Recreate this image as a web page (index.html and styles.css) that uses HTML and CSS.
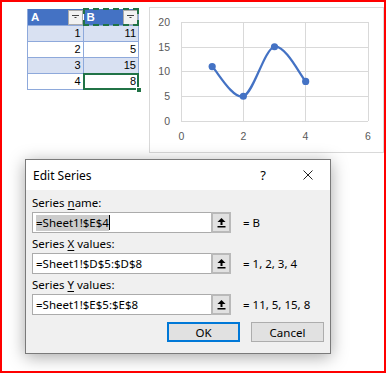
FILE: index.html
```html
<!DOCTYPE html>
<html>
<head>
<meta charset="utf-8">
<link rel="stylesheet" href="styles.css">
</head>
<body>
<div class="frame">
  <div class="top">
    <div class="table">
      <div class="row head">
        <div class="cell hcell">A<span class="dd"><svg width="7" height="4" viewBox="0 0 7 4"><path d="M0 0.5H7M2.5 2.5H4.5" stroke="#444" stroke-width="1"/></svg></span></div>
        <div class="cell hcell marquee">B<span class="dd"><svg width="7" height="4" viewBox="0 0 7 4"><path d="M0 0.5H7M2.5 2.5H4.5" stroke="#444" stroke-width="1"/></svg></span></div>
      </div>
      <div class="row band"><div class="cell">1</div><div class="cell">11</div></div>
      <div class="row"><div class="cell">2</div><div class="cell">5</div></div>
      <div class="row band"><div class="cell">3</div><div class="cell">15</div></div>
      <div class="row"><div class="cell">4</div><div class="cell active">8<span class="handle"></span></div></div>
    </div>
    <div class="chart">
      <svg width="240" height="144" viewBox="0 0 240 144">
        <g stroke="#D9D9D9" stroke-width="1">
          <path d="M31 14.5H218M31 39.5H218M31 63.5H218M31 88.5H218M31 113.5H218"/>
          <path d="M31.5 14V113M93.5 14V113M155.5 14V113M218.5 14V113"/>
        </g>
        <g class="lbl" text-anchor="end">
          <text x="20" y="18">20</text>
          <text x="20" y="43">15</text>
          <text x="20" y="67">10</text>
          <text x="20" y="92">5</text>
          <text x="20" y="117">0</text>
        </g>
        <g class="lbl" text-anchor="middle">
          <text x="31.5" y="132">0</text>
          <text x="93.5" y="132">2</text>
          <text x="155.5" y="132">4</text>
          <text x="218" y="132">6</text>
        </g>
        <path d="M62.17,58.55 C67.36,63.5 82.94,91.55 93.33,88.25 C103.72,84.95 114.11,41.2 124.5,38.75 C134.89,36.27 150.48,67.62 155.67,73.4" fill="none" stroke="#4472C4" stroke-width="2.25" stroke-linecap="round"/>
        <g fill="#4472C4">
          <circle cx="62.17" cy="58.55" r="3.6"/>
          <circle cx="93.33" cy="88.25" r="3.6"/>
          <circle cx="124.5" cy="38.75" r="3.6"/>
          <circle cx="155.67" cy="73.4" r="3.6"/>
        </g>
      </svg>
    </div>
  </div>

  <div class="dialog">
    <div class="titlebar">
      <span class="title">Edit Series</span>
      <span class="help">?</span>
      <span class="close"><svg width="10" height="10" viewBox="0 0 10 10"><path d="M0.5 0.5L9.5 9.5M9.5 0.5L0.5 9.5" stroke="#222" stroke-width="1"/></svg></span>
    </div>
    <div class="body">
      <div class="group">
        <div class="label">Series <u>n</u>ame:</div>
        <div class="line">
          <div class="field"><span class="sel">=Sheet1!$E$4</span><span class="caret"></span></div>
          <div class="pick"><svg width="9" height="10" viewBox="0 0 9 10"><path d="M4.5 0L8.5 4H5.5V7H3.5V4H0.5Z" fill="#000"/><rect x="0.5" y="8" width="8" height="1.5" fill="#000"/></svg></div>
          <div class="val">= B</div>
        </div>
      </div>
      <div class="group">
        <div class="label">Series <u>X</u> values:</div>
        <div class="line">
          <div class="field">=Sheet1!$D$5:$D$8</div>
          <div class="pick"><svg width="9" height="10" viewBox="0 0 9 10"><path d="M4.5 0L8.5 4H5.5V7H3.5V4H0.5Z" fill="#000"/><rect x="0.5" y="8" width="8" height="1.5" fill="#000"/></svg></div>
          <div class="val">= 1, 2, 3, 4</div>
        </div>
      </div>
      <div class="group">
        <div class="label">Series <u>Y</u> values:</div>
        <div class="line">
          <div class="field">=Sheet1!$E$5:$E$8</div>
          <div class="pick"><svg width="9" height="10" viewBox="0 0 9 10"><path d="M4.5 0L8.5 4H5.5V7H3.5V4H0.5Z" fill="#000"/><rect x="0.5" y="8" width="8" height="1.5" fill="#000"/></svg></div>
          <div class="val">= 11, 5, 15, 8</div>
        </div>
      </div>
      <div class="buttons">
        <div class="btn ok">OK</div>
        <div class="btn">Cancel</div>
      </div>
    </div>
  </div>
</div>
</body>
</html>
```
FILE: styles.css
```css
* { box-sizing: border-box; }
html, body { margin: 0; padding: 0; background: #fff; }
.frame {
  position: relative;
  width: 386px;
  height: 373px;
  border: 2px solid #FF0000;
  background: #fff;
  overflow: hidden;
}
.top {
  display: flex;
  align-items: flex-start;
  padding: 5px 0 0 25px;
}
.table {
  margin-top: 2px;
  width: 112px;
  font-family: "Liberation Sans", Arial, sans-serif;
  font-size: 11px;
  color: #000;
  border-left: 1px solid #8EA9DB;
  border-right: 1px solid #8EA9DB;
  border-bottom: 1px solid #8EA9DB;
}
.row { display: flex; height: 16px; border-top: 1px solid #8EA9DB; }
.row.head { border-top: none; height: 16px; }
.row.band { background: #D9E1F2; }
.cell {
  position: relative;
  flex: 1;
  display: flex;
  align-items: center;
  justify-content: flex-end;
  padding-right: 2px;
  line-height: 15px;
}
.cell:first-child { border-right: 1px solid #8EA9DB; }
.hcell {
  background: #4472C4;
  color: #fff;
  font-weight: bold;
  font-size: 11.5px;
  justify-content: space-between;
  padding: 0 0 0 3px;
  border-right: none !important;
}
.hcell:first-child { margin-right: 1px; }
.dd {
  width: 15px;
  height: 15px;
  background: #F2F2F2;
  border: 1px solid #ABABAB;
  display: flex;
  align-items: center;
  justify-content: center;
}
.marquee { outline: 2px dashed #217346; outline-offset: -1px; }
.active { outline: 2px solid #217346; outline-offset: -1px; }
.handle {
  position: absolute;
  right: -4px;
  bottom: -4px;
  width: 6px;
  height: 6px;
  background: #217346;
  border: 1px solid #fff;
}
.chart {
  margin-left: 10px;
  width: 235px;
  height: 146px;
  border: 1px solid #D9D9D9;
  flex: none;
}
.chart svg { display: block; }
.lbl text {
  font-family: "Liberation Sans", Arial, sans-serif;
  font-size: 10.5px;
  fill: #595959;
}
.dialog {
  position: absolute;
  left: 23px;
  top: 157px;
  width: 306px;
  height: 195px;
  border: 1px solid #7A7A7A;
  background: #F0F0F0;
  box-shadow: 0 3px 16px rgba(0,0,0,0.35);
  font-family: "Noto Sans", "Open Sans", sans-serif;
  font-size: 11.5px;
  color: #000;
  display: flex;
  flex-direction: column;
}
.titlebar {
  height: 30px;
  background: #fff;
  display: flex;
  align-items: center;
  padding-left: 7px;
}
.title { flex: 1; font-size: 12px; }
.help { font-size: 13px; width: 10px; margin-right: 35px; text-align: center; }
.close { width: 10px; height: 10px; margin-right: 17px; display: flex; }
.body { padding: 5px 6px 0 6px; }
.group { margin-bottom: 3px; }
.label { height: 16px; line-height: 16px; margin-bottom: 1px; }
u { text-decoration-thickness: 1px; text-underline-offset: 2px; }
.line { display: flex; align-items: center; height: 21px; }
.field {
  width: 179px;
  height: 21px;
  background: #fff;
  border: 1px solid #ABABAB;
  border-right: none;
  padding-left: 3px;
  display: flex;
  align-items: center;
}
.sel { background: #CCCCCC; line-height: 16px; }
.caret { width: 1px; height: 15px; background: #000; }
.pick {
  width: 20px;
  height: 21px;
  background: #E1E1E1;
  border: 2px solid #B9B9B9;
  display: flex;
  align-items: center;
  justify-content: center;
}
.val { margin-left: 12px; }
.buttons {
  display: flex;
  justify-content: flex-end;
  gap: 11px;
  margin-top: 7px;
}
.btn {
  width: 73px;
  height: 20px;
  background: #E1E1E1;
  border: 1px solid #ADADAD;
  display: flex;
  align-items: center;
  justify-content: center;
}
.btn.ok { border: 2px solid #0078D7; }
```
